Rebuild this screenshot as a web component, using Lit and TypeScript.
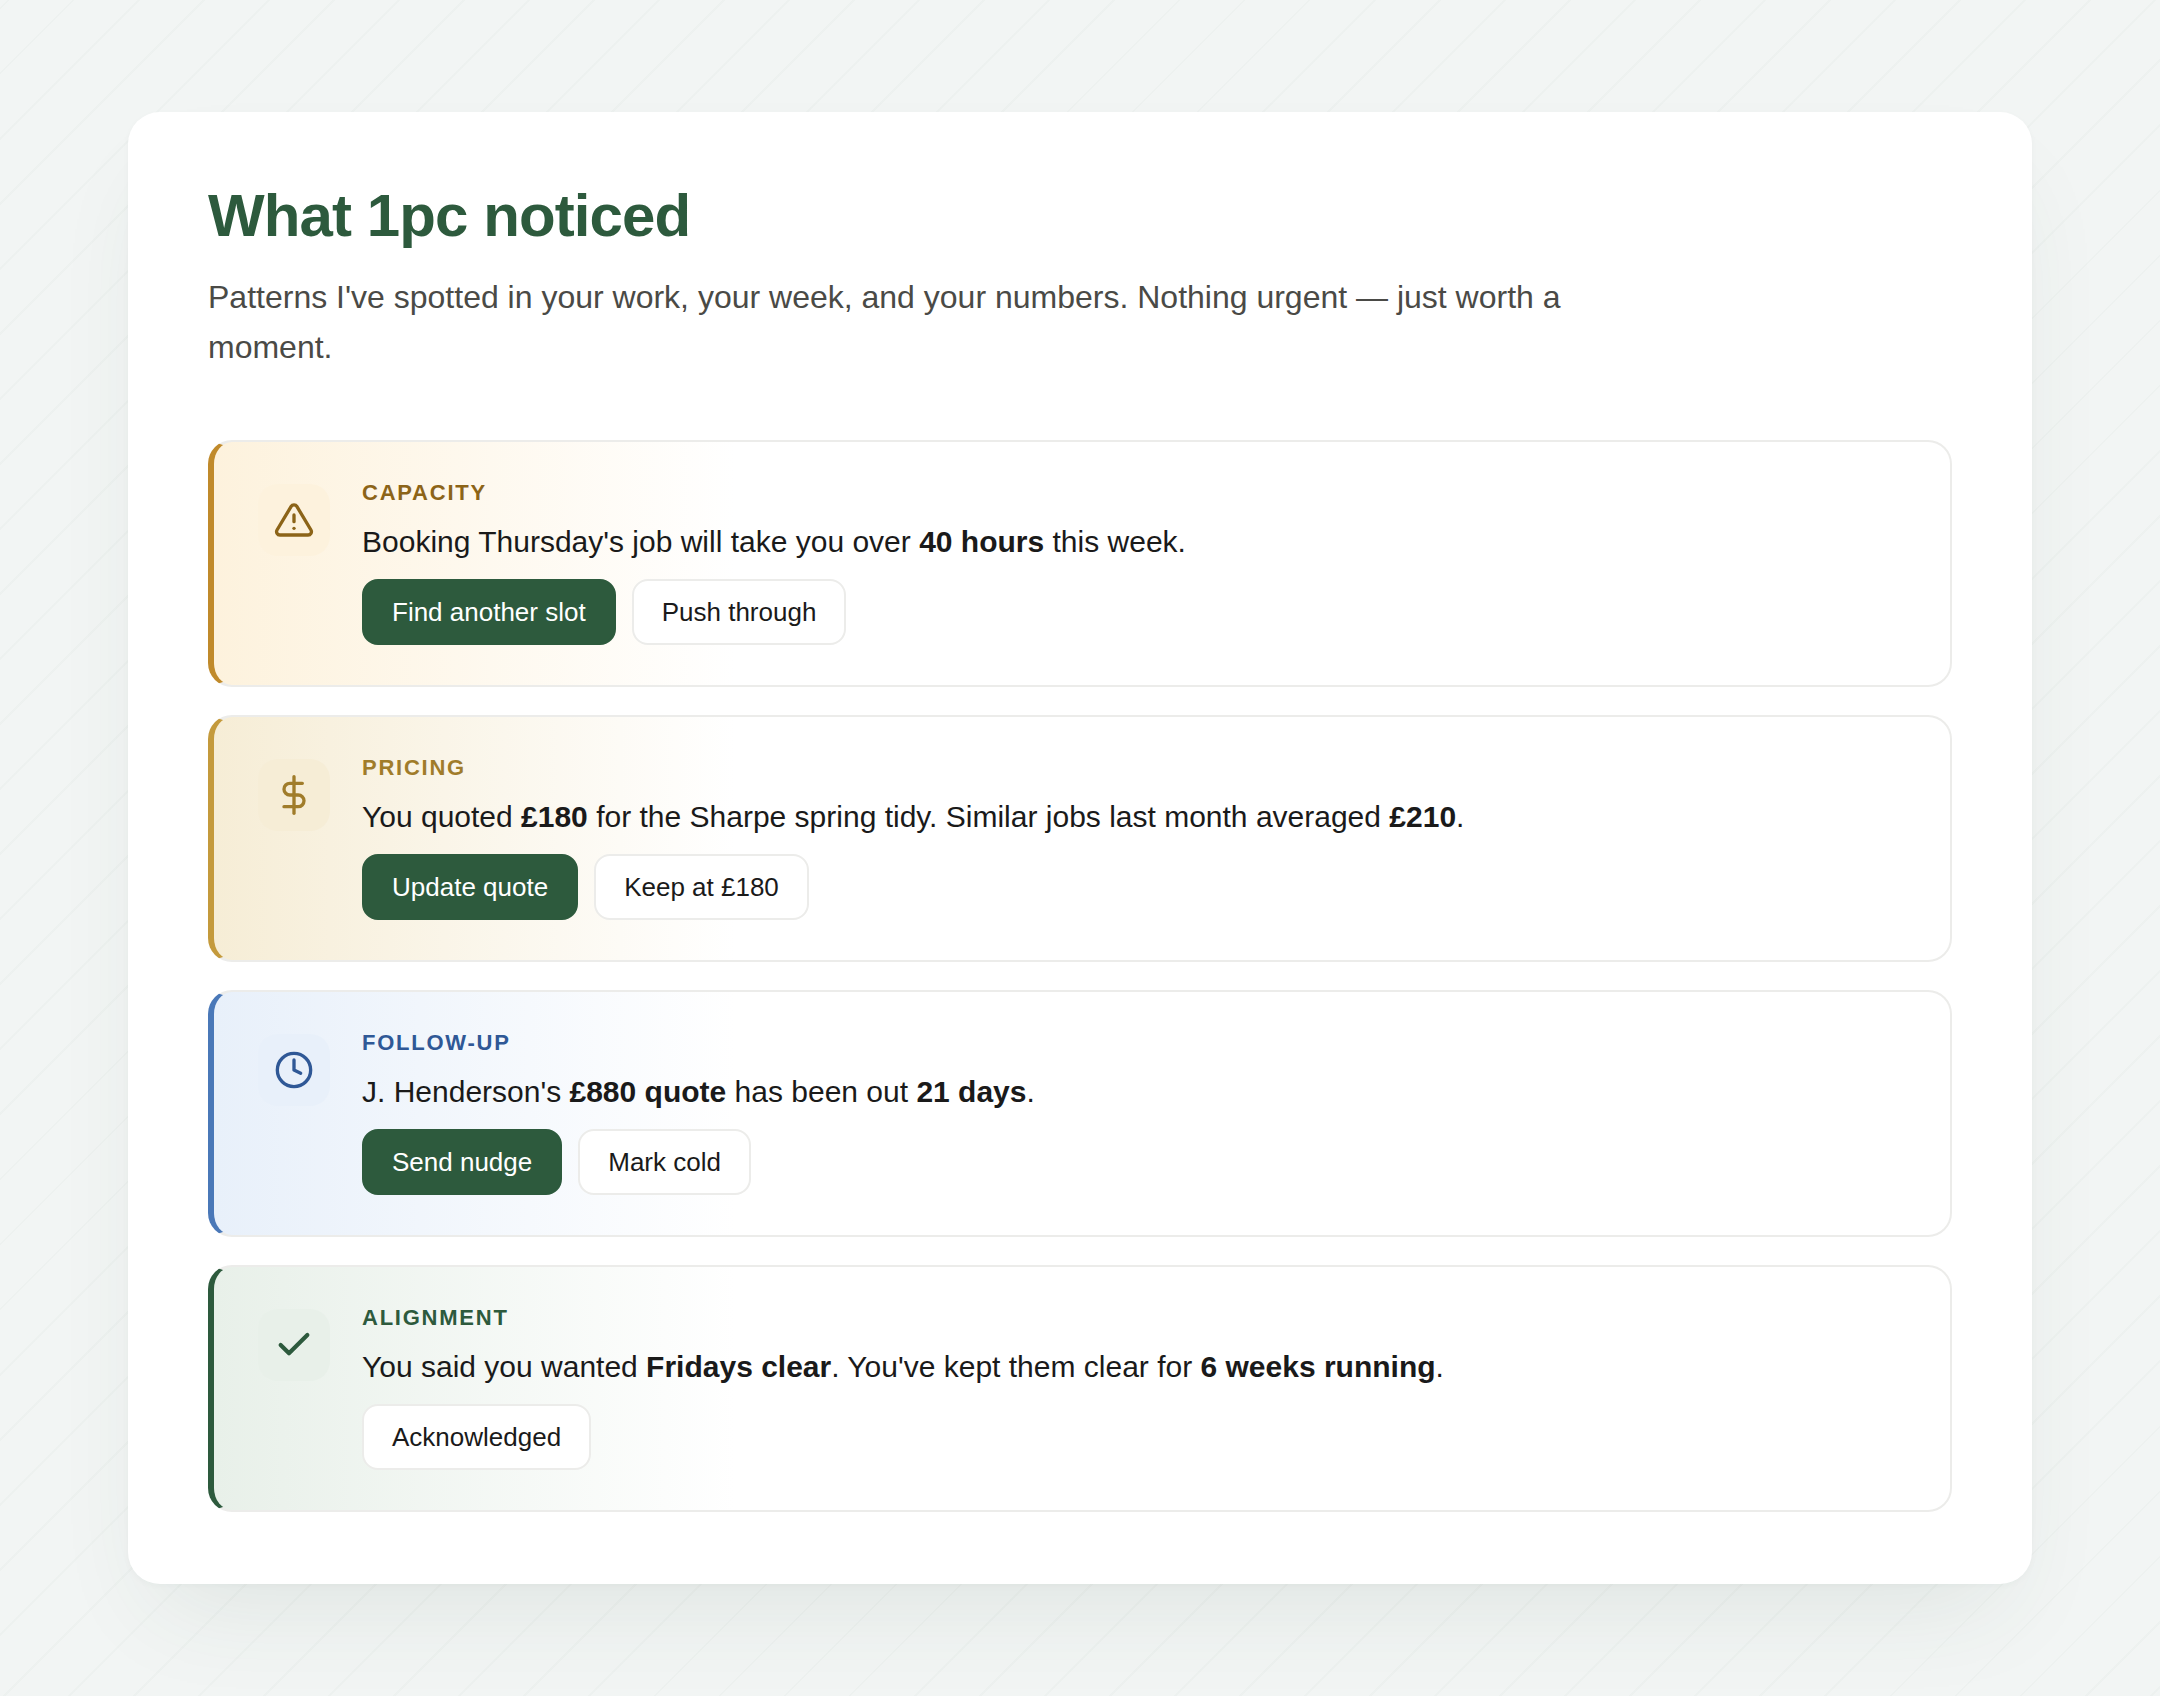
import { LitElement, html, css, svg, type TemplateResult, type SVGTemplateResult } from "lit";
import { customElement, property } from "lit/decorators.js";

type Tone = "capacity" | "pricing" | "followup" | "alignment";

interface Insight {
  tone: Tone;
  label: string;
  message: TemplateResult;
  primary?: string;
  secondary: string;
}

const ICONS: Record<Tone, SVGTemplateResult> = {
  capacity: svg`
    <path d="M10.29 3.86L1.82 18a2 2 0 0 0 1.71 3h16.94a2 2 0 0 0 1.71-3L13.71 3.86a2 2 0 0 0-3.42 0z"></path>
    <line x1="12" y1="9" x2="12" y2="13"></line>
    <line x1="12" y1="17" x2="12.01" y2="17"></line>`,
  pricing: svg`
    <line x1="12" y1="1" x2="12" y2="23"></line>
    <path d="M17 5H9.5a3.5 3.5 0 0 0 0 7h5a3.5 3.5 0 0 1 0 7H6"></path>`,
  followup: svg`
    <circle cx="12" cy="12" r="10"></circle>
    <polyline points="12 6 12 12 16 14"></polyline>`,
  alignment: svg`<polyline points="20 6 9 17 4 12"></polyline>`,
};

const INSIGHTS: Insight[] = [
  {
    tone: "capacity",
    label: "Capacity",
    message: html`Booking Thursday's job will take you over <strong>40 hours</strong> this week.`,
    primary: "Find another slot",
    secondary: "Push through",
  },
  {
    tone: "pricing",
    label: "Pricing",
    message: html`You quoted <strong>£180</strong> for the Sharpe spring tidy. Similar jobs last month averaged <strong>£210</strong>.`,
    primary: "Update quote",
    secondary: "Keep at £180",
  },
  {
    tone: "followup",
    label: "Follow-up",
    message: html`J. Henderson's <strong>£880 quote</strong> has been out <strong>21 days</strong>.`,
    primary: "Send nudge",
    secondary: "Mark cold",
  },
  {
    tone: "alignment",
    label: "Alignment",
    message: html`You said you wanted <strong>Fridays clear</strong>. You've kept them clear for <strong>6 weeks running</strong>.`,
    secondary: "Acknowledged",
  },
];

@customElement("insight-card")
export class InsightCard extends LitElement {
  @property({ attribute: false }) insight!: Insight;

  static styles = css`
    :host {
      display: block;
    }
    .card {
      display: flex;
      align-items: flex-start;
      gap: 32px;
      padding: 40px 44px;
      border: 2px solid #ececea;
      border-left: 6px solid var(--edge);
      border-radius: 24px;
      background: linear-gradient(90deg, var(--tint) 0%, #ffffff 30%);
    }
    .capacity {
      --edge: #c08a2b;
      --tint: #fdf2dd;
      --ink: #8c6418;
    }
    .pricing {
      --edge: #c49a3c;
      --tint: #f6edd6;
      --ink: #a07c2a;
    }
    .followup {
      --edge: #4a78b8;
      --tint: #e8f0fa;
      --ink: #2f5896;
    }
    .alignment {
      --edge: #2d5a3d;
      --tint: #e8f0e9;
      --ink: #2d5a3d;
    }
    .tile {
      flex: none;
      display: grid;
      place-items: center;
      width: 72px;
      height: 72px;
      margin-top: 2px;
      border-radius: 20px;
      background: var(--tint);
      color: var(--ink);
    }
    .icon {
      display: block;
      width: 40px;
      height: 40px;
      fill: none;
      stroke: currentColor;
      stroke-width: 2;
      stroke-linecap: round;
      stroke-linejoin: round;
    }
    .alignment .icon {
      stroke-width: 2.5;
    }
    .body {
      flex: 1;
      min-width: 0;
    }
    .label {
      margin: 0 0 16px;
      font-size: 22px;
      line-height: 22px;
      font-weight: 700;
      letter-spacing: 0.08em;
      text-transform: uppercase;
      color: var(--ink);
    }
    .message {
      margin: 0 0 15px;
      font-size: 30px;
      line-height: 44px;
      color: #1a1a1a;
    }
    .actions {
      display: flex;
      flex-wrap: wrap;
      gap: 16px;
    }
    .button {
      padding: 16px 28px;
      border: 2px solid #ececea;
      border-radius: 16px;
      background: #ffffff;
      color: #1a1a1a;
      font-family: inherit;
      font-size: 26px;
      line-height: 30px;
      cursor: pointer;
    }
    .primary {
      border-color: #2d5a3d;
      background: #2d5a3d;
      color: #ffffff;
    }
  `;

  render() {
    const { tone, label, message, primary, secondary } = this.insight;
    return html`
      <article class="card ${tone}">
        <div class="tile">
          <svg class="icon" viewBox="0 0 24 24" aria-hidden="true">${ICONS[tone]}</svg>
        </div>
        <div class="body">
          <h2 class="label">${label}</h2>
          <p class="message">${message}</p>
          <div class="actions">
            ${primary ? html`<button type="button" class="button primary">${primary}</button>` : null}
            <button type="button" class="button">${secondary}</button>
          </div>
        </div>
      </article>
    `;
  }
}

@customElement("app-root")
export class AppRoot extends LitElement {
  static styles = css`
    :host {
      display: block;
      box-sizing: border-box;
      min-height: 100vh;
      padding: 112px 128px;
      background:
        repeating-linear-gradient(
          135deg,
          transparent 0 5px,
          rgba(45, 90, 61, 0.025) 5px 7px,
          transparent 7px 46px
        ),
        #f2f5f4;
      font-family: "Liberation Sans", Arial, sans-serif;
    }
    .panel {
      padding: 72px 80px;
      border-radius: 32px;
      background: #ffffff;
      box-shadow:
        0 2px 6px rgba(45, 75, 55, 0.03),
        0 48px 96px -32px rgba(45, 75, 55, 0.1);
    }
    .title {
      margin: 0 0 24px;
      font-size: 60px;
      line-height: 64px;
      font-weight: 700;
      letter-spacing: -0.015em;
      color: #2d5a3d;
    }
    .intro {
      max-width: 1400px;
      margin: 0 0 68px;
      font-size: 32px;
      line-height: 50px;
      color: #4a4a46;
    }
    .list {
      display: grid;
      gap: 28px;
    }
  `;

  render() {
    return html`
      <main class="panel">
        <h1 class="title">What 1pc noticed</h1>
        <p class="intro">
          Patterns I've spotted in your work, your week, and your numbers. Nothing urgent — just worth a moment.
        </p>
        <section class="list">
          ${INSIGHTS.map((insight) => html`<insight-card .insight=${insight}></insight-card>`)}
        </section>
      </main>
    `;
  }
}
